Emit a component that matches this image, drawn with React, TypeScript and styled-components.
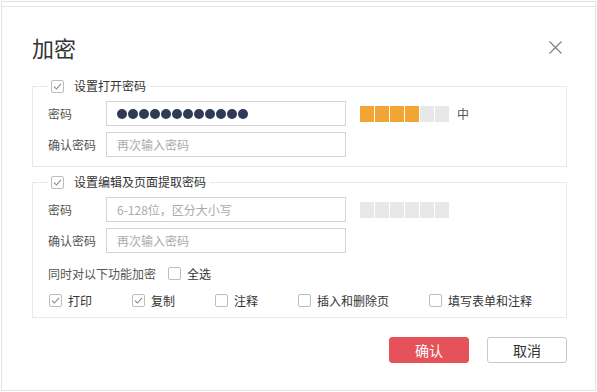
import styled, { createGlobalStyle, css } from "styled-components";

const GlobalStyle = createGlobalStyle`
  html, body {
    margin: 0;
    padding: 0;
    background: #fff;
  }
  body {
    font-family: "Noto Sans CJK SC", "Noto Sans", sans-serif;
    color: #333;
  }
  * {
    box-sizing: border-box;
  }
`;

const Dialog = styled.div`
  margin: 1px 0 0 1px;
  width: 595px;
  height: 390px;
  border: 1px solid #e2e2e2;
  background: #fff;
`;

const TopStrip = styled.div`
  height: 5px;
  border-bottom: 1px solid #e6e6e6;
`;

const Body = styled.div`
  padding: 29px 28px 0 30px;
`;

const Header = styled.div`
  display: flex;
  align-items: center;
  justify-content: space-between;
  height: 22px;
`;

const Title = styled.h1`
  margin: 0;
  font-size: 22px;
  line-height: 22px;
  font-weight: 400;
  color: #333;
`;

const Close = styled.button`
  display: flex;
  padding: 0;
  margin-right: 5px;
  border: 0;
  background: none;
  cursor: pointer;
`;

const Section = styled.fieldset<{ $gap: number }>`
  margin: ${(p) => p.$gap}px 0 0;
  padding: 8px 15px 9px;
  min-width: 0;
  border: 1px solid #e8e8e8;
`;

const Legend = styled.legend`
  display: flex;
  align-items: center;
  gap: 10px;
  height: 14px;
  padding: 0 4px 0 3px;
  font-size: 12px;
  line-height: 14px;
  color: #333;
`;

const Row = styled.div`
  display: flex;
  align-items: center;
  height: 25px;

  & + & {
    margin-top: 6px;
  }
`;

const Label = styled.span`
  width: 58px;
  font-size: 12px;
  color: #555;
`;

const fieldCss = css`
  width: 240px;
  height: 25px;
  padding: 0 10px;
  border: 1px solid #d4d4d4;
  border-radius: 0;
  background: #fff;
  font-family: inherit;
  font-size: 12px;
  color: #333;
  outline: none;
`;

const Field = styled.input`
  ${fieldCss}

  &::placeholder {
    color: #aaa;
  }
`;

const SecretField = styled.div`
  ${fieldCss}
  display: flex;
  align-items: center;
  gap: 1px;
`;

const Dot = styled.span`
  width: 10px;
  height: 10px;
  border-radius: 50%;
  background: #2f3a57;
`;

const Strength = styled.div`
  display: flex;
  gap: 1px;
  margin-left: 14px;
`;

const Segment = styled.span<{ $on: boolean }>`
  width: 14px;
  height: 16px;
  background: ${(p) => (p.$on ? "#f0a535" : "#e8e8e8")};
`;

const Level = styled.span`
  margin-left: 8px;
  font-size: 12px;
  color: #555;
`;

const OptionsTitle = styled.div`
  display: flex;
  align-items: center;
  gap: 12px;
  height: 16px;
  margin-top: 12px;
  font-size: 12px;
  color: #555;
`;

const Options = styled.div`
  display: flex;
  gap: 40px;
  height: 16px;
  margin-top: 11px;
  padding-left: 1px;
`;

const Option = styled.label`
  display: flex;
  align-items: center;
  gap: 6px;
  font-size: 12px;
  color: #333;
`;

const Box = styled.span`
  display: flex;
  align-items: center;
  justify-content: center;
  flex: none;
  width: 13px;
  height: 13px;
  border: 1px solid #bdbdbd;
  border-radius: 2px;
  background: #fff;
`;

const Footer = styled.div`
  display: flex;
  justify-content: flex-end;
  gap: 18px;
  margin-top: 19px;
`;

const Button = styled.button<{ $primary?: boolean }>`
  width: 80px;
  height: 26px;
  padding: 0;
  border-radius: 3px;
  border: 1px solid ${(p) => (p.$primary ? "#e5525a" : "#c9c9c9")};
  background: ${(p) => (p.$primary ? "#e5525a" : "#fff")};
  color: ${(p) => (p.$primary ? "#fff" : "#333")};
  font-family: inherit;
  font-size: 14px;
  cursor: pointer;
`;

const Checkbox = ({ checked }: { checked?: boolean }) => (
  <Box>
    {checked && (
      <svg width="9" height="9" viewBox="0 0 9 9">
        <polyline
          points="1,4.6 3.4,7 8,1.8"
          fill="none"
          stroke="#8a8a8a"
          strokeWidth="1.1"
        />
      </svg>
    )}
  </Box>
);

const StrengthBar = ({ level }: { level: number }) => (
  <Strength>
    {[0, 1, 2, 3, 4, 5].map((i) => (
      <Segment key={i} $on={i < level} />
    ))}
  </Strength>
);

const options = [
  { name: "打印", checked: true },
  { name: "复制", checked: true },
  { name: "注释", checked: false },
  { name: "插入和删除页", checked: false },
  { name: "填写表单和注释", checked: false },
];

const App = () => {
  return (
    <>
      <GlobalStyle />
      <Dialog>
        <TopStrip />
        <Body>
          <Header>
            <Title>加密</Title>
            <Close aria-label="关闭">
              <svg width="13" height="13" viewBox="0 0 13 13">
                <path
                  d="M0.5 0.5 L12.5 12.5 M12.5 0.5 L0.5 12.5"
                  stroke="#7d7d7d"
                  strokeWidth="1.1"
                  fill="none"
                />
              </svg>
            </Close>
          </Header>

          <Section $gap={21}>
            <Legend>
              <Checkbox checked />
              设置打开密码
            </Legend>
            <Row>
              <Label>密码</Label>
              <SecretField>
                {Array.from({ length: 12 }).map((_, i) => (
                  <Dot key={i} />
                ))}
              </SecretField>
              <StrengthBar level={4} />
              <Level>中</Level>
            </Row>
            <Row>
              <Label>确认密码</Label>
              <Field placeholder="再次输入密码" />
            </Row>
          </Section>

          <Section $gap={8}>
            <Legend>
              <Checkbox checked />
              设置编辑及页面提取密码
            </Legend>
            <Row>
              <Label>密码</Label>
              <Field placeholder="6-128位，区分大小写" />
              <StrengthBar level={0} />
            </Row>
            <Row>
              <Label>确认密码</Label>
              <Field placeholder="再次输入密码" />
            </Row>
            <OptionsTitle>
              同时对以下功能加密
              <Option>
                <Checkbox />
                全选
              </Option>
            </OptionsTitle>
            <Options>
              {options.map((o) => (
                <Option key={o.name}>
                  <Checkbox checked={o.checked} />
                  {o.name}
                </Option>
              ))}
            </Options>
          </Section>

          <Footer>
            <Button $primary>确认</Button>
            <Button>取消</Button>
          </Footer>
        </Body>
      </Dialog>
    </>
  );
};

export default App;
